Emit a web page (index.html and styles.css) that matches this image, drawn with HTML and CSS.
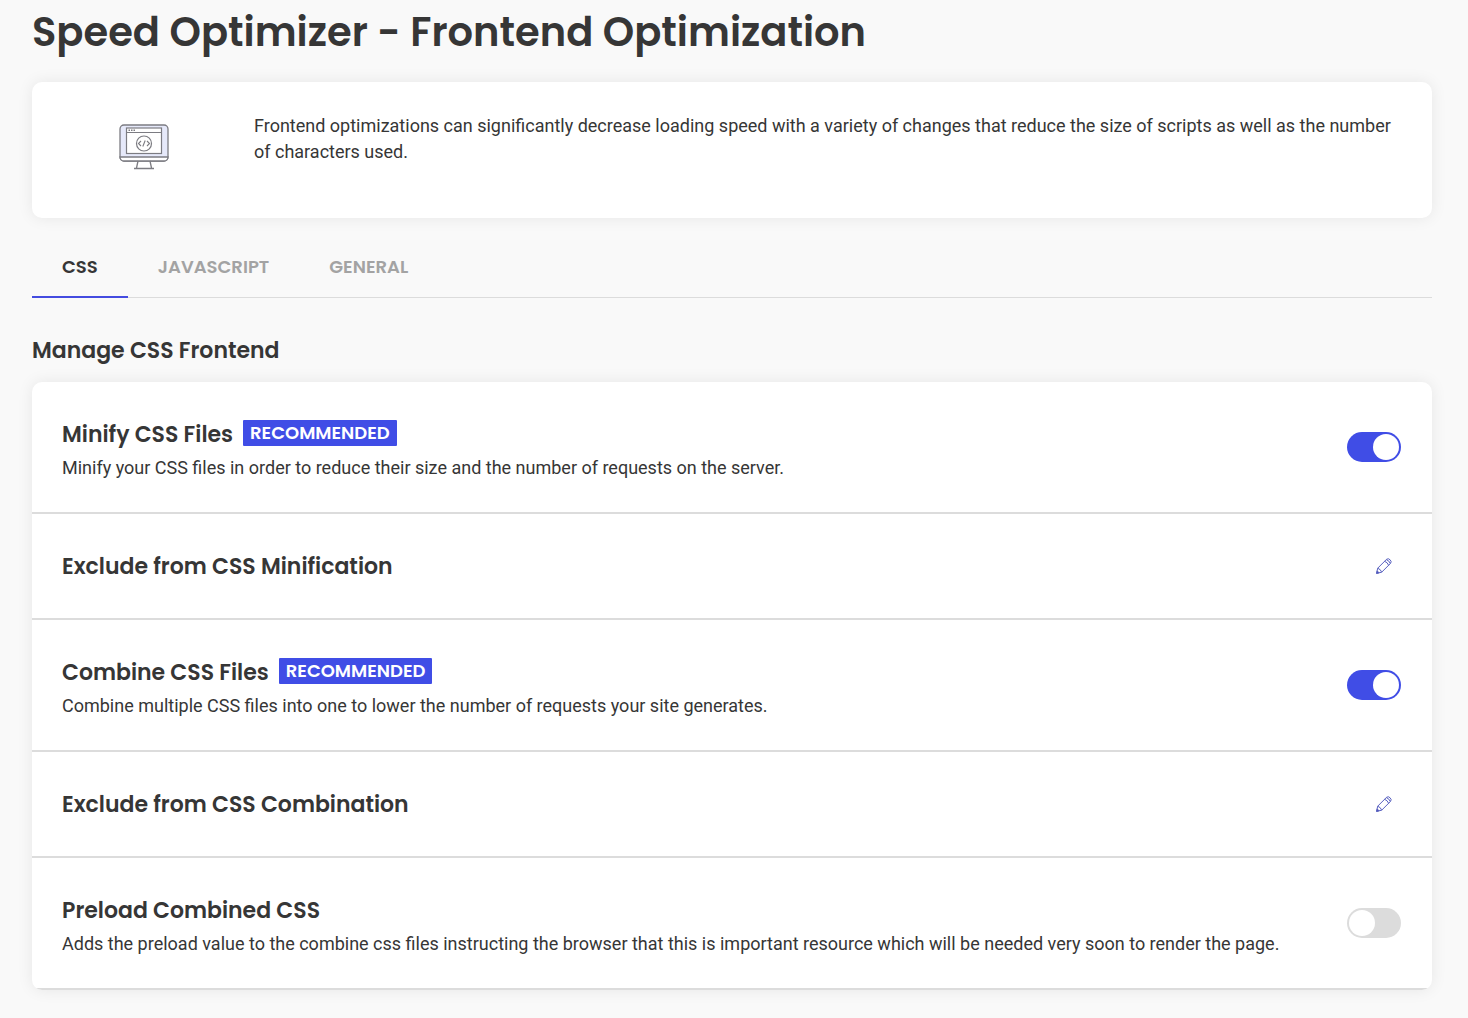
FILE: index.html
```html
<!DOCTYPE html>
<html lang="en">

<head>
    <meta charset="utf-8">
    <meta name="viewport" content="width=device-width, initial-scale=1">
    <title>Speed Optimizer - Frontend Optimization</title>
    <link rel="stylesheet" href="styles.css">
</head>

<body>
    <main class="page">
        <h1 class="page-title">Speed Optimizer - Frontend Optimization</h1>

        <section class="card intro">
            <svg class="intro-icon" viewBox="0 0 52 48" fill="none" stroke="#7c7c82" aria-hidden="true">
                <rect x="2" y="2" width="48" height="36" rx="4" fill="#e6e9fa" stroke-width="1.3" />
                <path d="M2 34c0 2.200 1.800 4 4 4h40c2.200 0 4-1.800 4-4z" fill="#fff" stroke-width="1.3" />
                <rect x="8.500" y="5" width="35" height="25.500" fill="#fff" stroke-width="1.2" />
                <path d="M8.500 9.500h35" stroke-width="1.1" />
                <path d="M10.500 7.300H12m1 0h1.500m1 0H17" stroke-width="1.500" />
                <circle cx="26" cy="20.500" r="7.500" stroke-width="1.2" />
                <path d="M23 18l-2.500 2.500L23 23M29 18l2.500 2.500L29 23M27.200 17.500l-2.400 6" stroke-width="1.1" />
                <path d="M20 38l-1.500 7M32 38l1.500 7M16 45.500h20" stroke-width="1.3" />
            </svg>
            <p class="text">Frontend optimizations can significantly decrease loading speed with a variety of changes that reduce the size of scripts as well as the number of characters used.</p>
        </section>

        <div class="tabs" role="tablist">
            <button class="tab active" type="button" role="tab" aria-selected="true">CSS</button>
            <button class="tab" type="button" role="tab" aria-selected="false">JAVASCRIPT</button>
            <button class="tab" type="button" role="tab" aria-selected="false">GENERAL</button>
        </div>

        <h2 class="section-title">Manage CSS Frontend</h2>

        <section class="card settings">
            <div class="row">
                <div class="row-body">
                    <h3 class="row-title"><label for="minify">Minify CSS Files</label> <span class="badge">RECOMMENDED</span></h3>
                    <p class="text">Minify your CSS files in order to reduce their size and the number of requests on the server.</p>
                </div>
                <input class="toggle" type="checkbox" id="minify" checked>
            </div>
            <div class="row">
                <div class="row-body">
                    <h3 class="row-title">Exclude from CSS Minification</h3>
                </div>
                <button class="edit" type="button" aria-label="Edit">
                    <svg class="edit-icon" viewBox="0 0 16 16" aria-hidden="true">
                        <path d="M.6 15.400l1.100-5.200 8.800-8.800q1.700-1.600 3.600.4 2 1.900.4 3.600l-8.800 8.800z" />
                        <path d="M1.700 10.200q3 1 4 4M8.600 3.300q3 1 4 4M10.300 1.600q3 1 4 4" />
                        <path class="tip" d="M.6 15.400l.6-2.500 1.900 1.900z" />
                    </svg>
                </button>
            </div>
            <div class="row">
                <div class="row-body">
                    <h3 class="row-title"><label for="combine">Combine CSS Files</label> <span class="badge">RECOMMENDED</span></h3>
                    <p class="text">Combine multiple CSS files into one to lower the number of requests your site generates.</p>
                </div>
                <input class="toggle" type="checkbox" id="combine" checked>
            </div>
            <div class="row">
                <div class="row-body">
                    <h3 class="row-title">Exclude from CSS Combination</h3>
                </div>
                <button class="edit" type="button" aria-label="Edit">
                    <svg class="edit-icon" viewBox="0 0 16 16" aria-hidden="true">
                        <path d="M.6 15.400l1.100-5.200 8.800-8.800q1.700-1.600 3.600.4 2 1.900.4 3.600l-8.800 8.800z" />
                        <path d="M1.700 10.200q3 1 4 4M8.600 3.300q3 1 4 4M10.300 1.600q3 1 4 4" />
                        <path class="tip" d="M.6 15.400l.6-2.500 1.900 1.900z" />
                    </svg>
                </button>
            </div>
            <div class="row">
                <div class="row-body">
                    <h3 class="row-title"><label for="preload">Preload Combined CSS</label></h3>
                    <p class="text">Adds the preload value to the combine css files instructing the browser that this is important resource which will be needed very soon to render the page.</p>
                </div>
                <input class="toggle" type="checkbox" id="preload">
            </div>
        </section>
    </main>
</body>

</html>
```

FILE: styles.css
```css
* {
    box-sizing: border-box;
}

body {
    margin: 0;
    background-color: #f9f9f9;
    color: #363636;
    font-family: Roboto, sans-serif;
    font-size: 18px;
    line-height: 26px;
}

h1,
h2,
h3,
p {
    margin: 0;
}

.page {
    padding: 8px 36px 28px 32px;
}

.page-title,
.section-title,
.row-title,
.tab {
    font-family: Poppins, Inter, sans-serif;
    font-weight: 600;
}

.page-title {
    margin-bottom: 26px;
    font-size: 40px;
    line-height: 48px;
}

.card {
    background-color: #fff;
    border-radius: 10px;
    box-shadow: 0 0 16px rgba(0, 0, 0, 0.08);
}

.intro {
    display: grid;
    grid-template-columns: 164px 1fr;
    column-gap: 28px;
    min-height: 136px;
    padding: 31px 30px;
}

.intro-icon {
    width: 52px;
    height: 48px;
    margin-top: 10px;
    justify-self: center;
}

/* tabs */
.tabs {
    display: flex;
    margin-top: 18px;
    border-bottom: 1px solid #dcdcdc;
}

.tab {
    margin-bottom: -1px;
    padding: 18px 30px 16px;
    border: none;
    border-bottom: 2px solid transparent;
    background: none;
    color: #a3a3a3;
    font-size: 18px;
    line-height: 26px;
    cursor: pointer;
}

.tab.active {
    border-bottom-color: #444ce0;
    color: #363636;
}

.section-title {
    margin: 38px 0 16px;
    font-size: 22px;
    line-height: 30px;
}

/* settings list */
.settings {
    overflow: hidden;
}

.row {
    display: flex;
    align-items: center;
    justify-content: space-between;
    gap: 30px;
    padding: 31px 31px 31px 30px;
    border-bottom: 2px solid #dcdcdc;
}

.row-title {
    display: flex;
    align-items: flex-start;
    gap: 10px;
    padding: 7px 0 5px;
    font-size: 22px;
    line-height: 30px;
}

.badge {
    padding: 0 7px;
    border-radius: 1px;
    background-color: #404de6;
    color: #fff;
    font-size: 18px;
    line-height: 26px;
}

.toggle {
    flex: none;
    display: flex;
    width: 54px;
    height: 30px;
    margin: 0;
    padding: 2px;
    border-radius: 15px;
    background-color: #dcdcdc;
    appearance: none;
    cursor: pointer;
}

.toggle::before {
    content: "";
    width: 26px;
    height: 26px;
    border-radius: 50%;
    background-color: #fff;
}

.toggle:checked {
    justify-content: flex-end;
    background-color: #404de6;
}

.edit {
    flex: none;
    display: flex;
    align-items: center;
    justify-content: center;
    width: 34px;
    height: 34px;
    padding: 0;
    border: none;
    background: none;
    cursor: pointer;
}

.edit-icon {
    width: 16px;
    height: 16px;
    fill: none;
    stroke: #5a62c0;
}

.edit-icon .tip {
    fill: #4850b8;
}
```
